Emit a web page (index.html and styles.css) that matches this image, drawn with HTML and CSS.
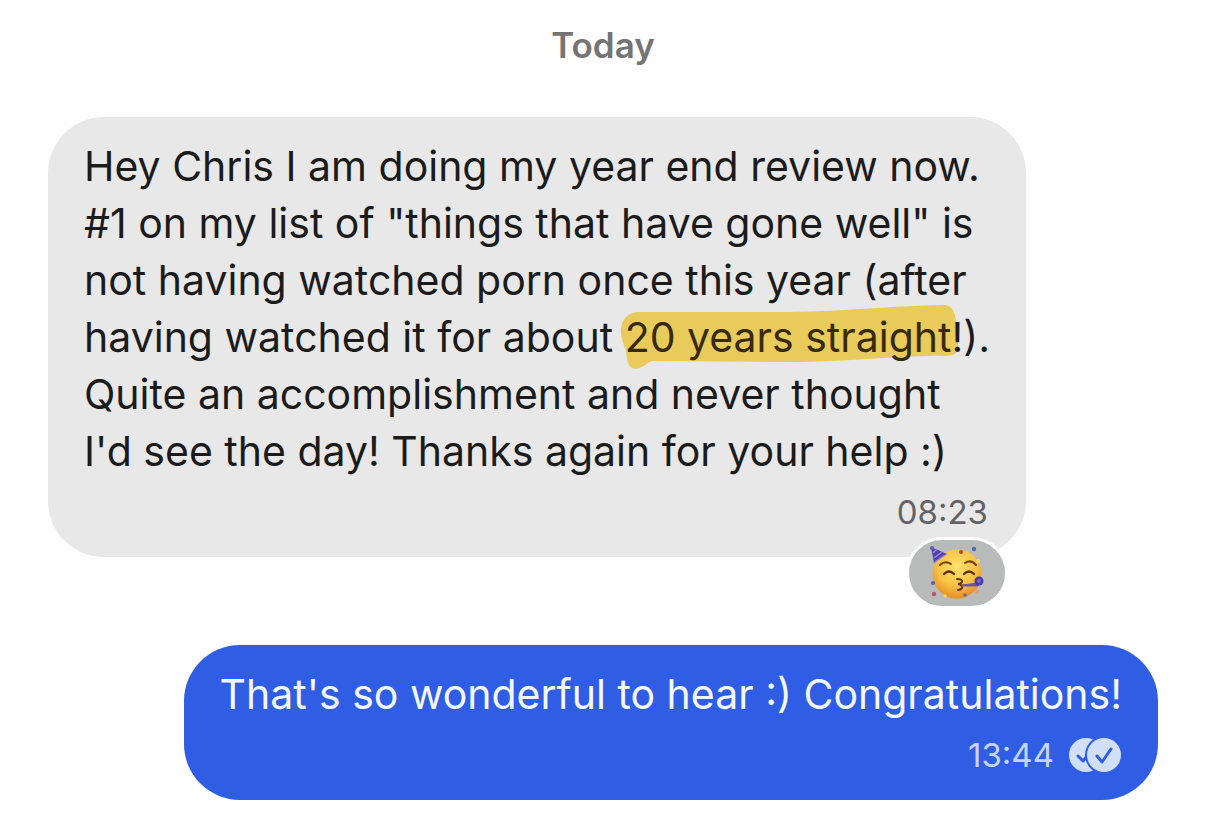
FILE: index.html
```html
<!DOCTYPE html>
<html lang="en">
<head>
    <meta charset="UTF-8">
    <meta name="viewport" content="width=device-width, initial-scale=1.0">
    <title>Chat</title>
    <link rel="stylesheet" href="styles.css">
</head>
<body>
    <main class="chat">
        <h1 class="day">Today</h1>

        <article class="bubble received">
            <p class="text">Hey Chris I am doing my year end review now. #1 on my list of "things that have gone well" is not having watched porn once this year (after having watched it for about <mark class="marker"><svg class="stroke" viewBox="0 0 340 66" preserveAspectRatio="none" aria-hidden="true">
                <path d="M1 24C2 14 9 9 18 8L170 8C230 7 270 2 325 1C333 1 336 8 337 16C341 26 342 40 338 48C333 54 324 51 310 52C270 53 230 57 180 58L32 57C26 59 23 64 16 65C8 65 7 56 6 46C3 39 0 32 1 24Z" fill="#e9cb5c"/>
            </svg>20 years straight</mark>!). Quite an accomplishment and never thought I'd see the day! Thanks again for your help :)</p>
            <div class="meta"><time datetime="08:23">08:23</time></div>
            <button class="reaction" type="button" aria-label="Party face reaction">
                <svg class="face" viewBox="0 0 56 56" aria-hidden="true">
                    <defs>
                        <radialGradient id="skin" cx="50%" cy="35%" r="65%">
                            <stop offset="0" stop-color="#fde26d"/>
                            <stop offset="0.6" stop-color="#f8c345"/>
                            <stop offset="1" stop-color="#e58f22"/>
                        </radialGradient>
                    </defs>
                    <circle cx="28" cy="29" r="24.500" fill="url(#skin)"/>
                    <!-- hat -->
                    <path d="M2 2L18 9Q12 12 5 18Z" fill="#5142b0"/>
                    <path d="M4 8L8 4M5 13L13 7M6 17L16 10" stroke="#9b82e6" stroke-width="1.500" fill="none"/>
                    <circle cx="3" cy="3" r="2" fill="#6554cc"/>
                    <!-- brows and eyes -->
                    <path d="M11 20Q16 15 22 19M36 18Q42 14 47 20" stroke="#78410d" stroke-width="2" stroke-linecap="round" fill="none"/>
                    <path d="M15 29Q20 24 25 29M35 29Q40 24 45 29" stroke="#5c300b" stroke-width="2.400" stroke-linecap="round" fill="none"/>
                    <!-- mouth and blower -->
                    <path d="M28 34Q34 34 33 37Q32 39 29 39Q34 40 33 43Q32 45 29 45" stroke="#63310c" stroke-width="2" stroke-linecap="round" fill="none"/>
                    <path d="M33 40L49 38L49 41L33 41Z" fill="#6652b5" stroke="#6652b5"/>
                    <circle cx="50" cy="36" r="4.500" fill="#4a3aa8"/>
                    <circle cx="50" cy="36" r="2" fill="#7966cf"/>
                    <!-- confetti -->
                    <circle cx="32" cy="7" r="2" fill="#b24a2c"/>
                    <circle cx="45" cy="4" r="2.200" fill="#466fae"/>
                    <circle cx="49" cy="16" r="2" fill="#f7dc62"/>
                    <circle cx="4" cy="38" r="2" fill="#4d63ae"/>
                    <circle cx="5" cy="49" r="2.200" fill="#bc5768"/>
                    <circle cx="16" cy="51" r="1.800" fill="#f3d55b"/>
                    <circle cx="36" cy="50" r="1.800" fill="#76648e"/>
                    <circle cx="48" cy="47" r="2" fill="#dda16b"/>
                </svg>
            </button>
        </article>

        <article class="bubble sent">
            <p class="text">That's so wonderful to hear :) Congratulations!</p>
            <div class="meta">
                <time datetime="13:44">13:44</time>
                <svg class="ticks" viewBox="0 0 54 36" role="img" aria-label="Read">
                    <circle cx="18" cy="18" r="17" fill="#d2dffb"/>
                    <path d="M10 19L15 24L24 13" fill="none" stroke="#2f5de4" stroke-width="3" stroke-linecap="round" stroke-linejoin="round"/>
                    <circle cx="36" cy="18" r="19" fill="#2f5de4"/>
                    <circle cx="36" cy="18" r="17" fill="#d2dffb"/>
                    <path d="M29 19L34 25L43 12" fill="none" stroke="#2f5de4" stroke-width="3" stroke-linecap="round" stroke-linejoin="round"/>
                </svg>
            </div>
        </article>
    </main>
</body>
</html>
```
FILE: styles.css
```css
body {
    margin: 0;
    background: #fefefe;
    font-family: Inter, "Liberation Sans", sans-serif;
}

.chat {
    display: flex;
    flex-direction: column;
    align-items: flex-start;
    padding: 23px 48px 20px;
}

.day {
    align-self: center;
    margin: 0 0 50px;
    font-size: 35px;
    font-weight: 600;
    line-height: 44px;
    color: #747474;
}

.bubble {
    position: relative;
    box-sizing: border-box;
    max-width: 978px;
    padding: 21px 36px 23px;
    border-radius: 56px;
}

.received {
    margin-bottom: 88px;
    padding-right: 28px;
    background: #e8e8e8;
    color: #1b1b1b;
}

.sent {
    align-self: flex-end;
    background: #2f5de4;
    color: #f3f8ff;
}

.text {
    position: relative;
    z-index: 0;
    margin: 0;
    font-size: 41px;
    line-height: 57px;
}

.marker {
    position: relative;
    background: none;
    color: #382a05;
    white-space: nowrap;
}

/* hand-drawn highlighter, runs a little past the words */
.stroke {
    position: absolute;
    z-index: -1;
    top: -8px;
    left: -5px;
    width: calc(100% + 12px);
    height: 66px;
}

.meta {
    display: flex;
    justify-content: flex-end;
    align-items: center;
    gap: 14px;
    padding-top: 10px;
    font-size: 33px;
    line-height: 44px;
}

.received .meta {
    padding-right: 10px;
    color: #636363;
}

.sent .meta {
    color: #c5d5fa;
}

.ticks {
    width: 54px;
    height: 36px;
}

.reaction {
    position: absolute;
    right: 18px;
    bottom: -52px;
    display: flex;
    justify-content: center;
    align-items: center;
    width: 102px;
    height: 72px;
    padding: 0;
    border: 3px solid #fefefe;
    border-radius: 36px;
    background: #b9baba;
}

.face {
    width: 56px;
    height: 56px;
}
```
